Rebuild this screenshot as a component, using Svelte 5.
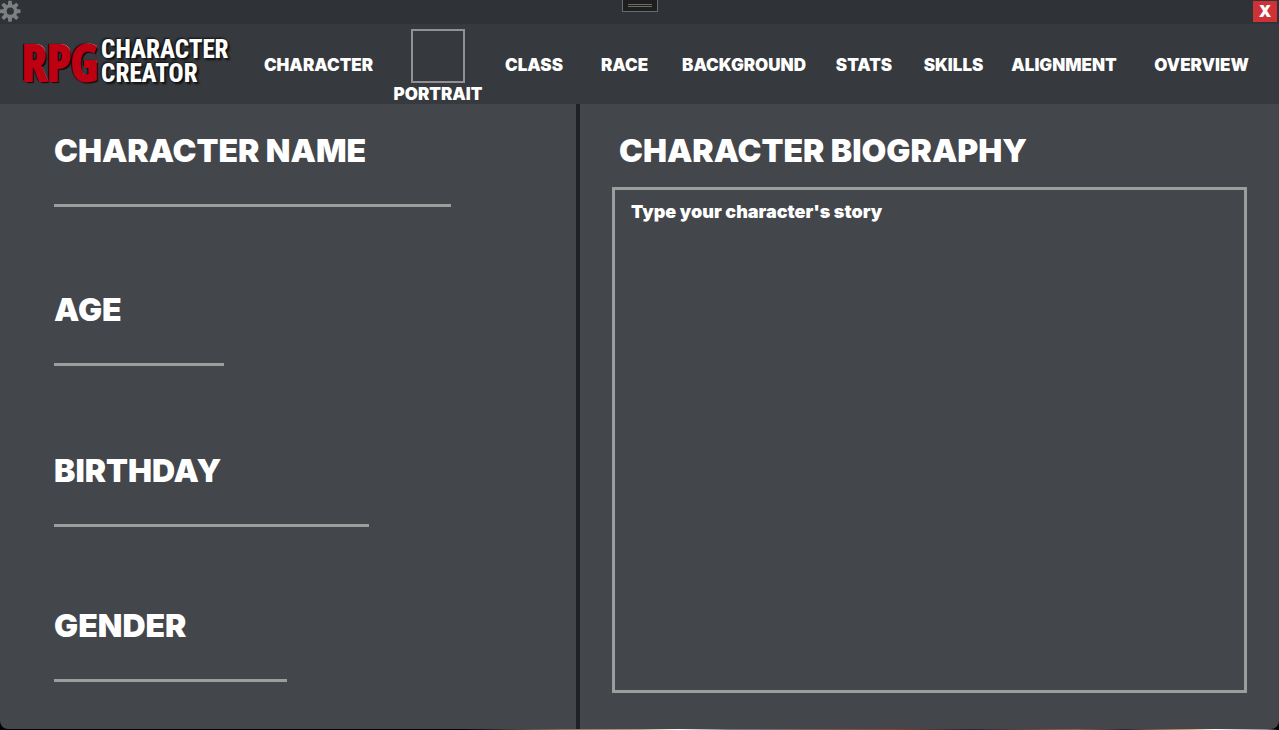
<script>
  const tabs = ['Character', 'Portrait', 'Class', 'Race', 'Background', 'Stats', 'Skills', 'Alignment', 'Overview'];
  const fields = [
    { id: 'name', label: 'Character name', width: 397 },
    { id: 'age', label: 'Age', width: 170 },
    { id: 'birthday', label: 'Birthday', width: 315 },
    { id: 'gender', label: 'Gender', width: 233 },
  ];
  let values = $state({ name: '', age: '', birthday: '', gender: '' });
  let story = $state('');
</script>

<div class="desktop">
  <div class="window">
    <div class="titlebar">
      <button class="settings" aria-label="Settings">
        <svg viewBox="0 0 22 22" width="22" height="22">
          <g fill="#7d7f80">
            {#each [0, 45, 90, 135, 180, 225, 270, 315] as angle}
              <path d="M8.3 5.5 8.8.5h3.4l.5 5z" transform="translate(-.5 .3) rotate({angle} 10.5 11)" />
            {/each}
          </g>
          <circle cx="10.3" cy="11.2" r="5.3" fill="none" stroke="#7d7f80" stroke-width="3.4" />
        </svg>
      </button>
      <button class="grip" aria-label="Move window"><i></i><i></i></button>
      <button class="close" aria-label="Close">X</button>
    </div>

    <header>
      <a class="logo" href="#home">
        <span class="rpg">RPG</span>
        <span class="words"><span>CHARACTER</span><span>CREATOR</span></span>
      </a>
      <nav>
        {#each tabs as tab}
          <a href="#{tab.toLowerCase()}" class:portrait={tab === 'Portrait'}>
            {#if tab === 'Portrait'}<i class="frame"></i>{/if}
            {tab}
          </a>
        {/each}
      </nav>
    </header>

    <main>
      <form class="details">
        {#each fields as f}
          <div class="field">
            <label for={f.id}>{f.label}</label>
            <input id={f.id} type="text" bind:value={values[f.id]} style="width: {f.width}px" />
          </div>
        {/each}
      </form>
      <section class="biography">
        <label for="bio">Character biography</label>
        <textarea id="bio" placeholder="Type your character's story" bind:value={story}></textarea>
      </section>
    </main>
  </div>
</div>

<style>
  :global(body) {
    margin: 0;
    background: #000;
  }
  .desktop {
    box-sizing: border-box;
    display: flex;
    min-height: 100vh;
    padding-bottom: 1px;
    font-family: Inter, 'Liberation Sans', sans-serif;
    font-weight: 900;
    color: #fff;
    background: linear-gradient(90deg, #000 0 36%, #8a7560 44%, #b09a80 50%, #fff 53%, #77787c 57%, #8a4030 70%, #30242a 76%, #a05a4a 84%, #30242a 88%, #d0a070 93%, #fff 95%, #888 99%, #000) bottom / 100% 1px no-repeat, #000;
  }
  .window {
    flex: 1;
    display: flex;
    flex-direction: column;
    overflow: hidden;
    border-radius: 0 0 8px 8px;
    background: #43464a;
  }
  button {
    padding: 0;
    border: 0;
    background: none;
    color: inherit;
    font: inherit;
  }
  .titlebar {
    display: grid;
    grid-template-columns: 1fr auto 1fr;
    height: 24px;
    background: #2f3236;
  }
  .settings {
    width: 22px;
    height: 22px;
  }
  .settings svg {
    display: block;
  }
  .grip {
    display: flex;
    flex-direction: column;
    justify-content: center;
    align-items: center;
    gap: 1px;
    box-sizing: border-box;
    width: 36px;
    height: 12px;
    border: 1px solid #6b6b6c;
    border-top: 0;
    background: #1e1e1f;
  }
  .grip i {
    width: 24px;
    height: 1px;
    background: #6b6b6c;
  }
  .close {
    justify-self: end;
    width: 24px;
    height: 21px;
    margin: 1px 2px 0 0;
    background: #cc3236;
    font-size: 16px;
    line-height: 21px;
  }
  header {
    display: flex;
    height: 80px;
    background: #36393d;
  }
  .logo {
    display: flex;
    align-items: center;
    gap: 3px;
    box-sizing: border-box;
    width: 253px;
    flex-shrink: 0;
    padding: 0 0 4px 22px;
    color: #fff;
    text-decoration: none;
  }
  .rpg {
    font: 700 50px/50px 'Open Sans Condensed', 'Roboto Condensed', sans-serif;
    color: #bd0012;
    -webkit-text-stroke: 2px #bd0012;
    text-shadow: -2px -1px 1px #160608, 2px 2px 1px #160608, -1px 1px 1px #160608, 1px -1px 0 #d9a0a0;
  }
  .words {
    display: flex;
    flex-direction: column;
    font: 800 25px/24px 'Roboto Condensed', 'Open Sans Condensed', sans-serif;
    text-shadow: 2px 2px 2px #111, -1px -1px 2px #111;
  }
  nav {
    flex: 1;
    display: grid;
    grid-template-columns: 131fr 108fr 84fr 97fr 142fr 98fr 81fr 140fr 135fr;
    padding-right: 10px;
  }
  nav a {
    display: flex;
    flex-direction: column;
    align-items: center;
    justify-content: center;
    gap: 1px;
    padding-top: 2px;
    color: #fff;
    font-size: 17px;
    line-height: 20px;
    text-decoration: none;
    text-transform: uppercase;
  }
  nav .portrait {
    justify-content: flex-end;
  }
  .frame {
    box-sizing: border-box;
    width: 54px;
    height: 54px;
    border: 2px solid #909192;
  }
  main {
    flex: 1;
    display: grid;
    grid-template-columns: 576fr 703fr;
  }
  .details {
    display: grid;
    grid-template-rows: 159fr 161fr 155fr 125fr;
    padding: 25px 0 0 54px;
    margin: 0;
  }
  label {
    display: block;
    font-size: 32px;
    line-height: 44px;
    text-transform: uppercase;
  }
  .field input {
    display: block;
    box-sizing: border-box;
    max-width: 100%;
    height: 34px;
    padding: 0;
    border: 0;
    border-bottom: 3px solid #9d9d9d;
    background: none;
    color: #fff;
    font: inherit;
    font-size: 18px;
    outline: none;
  }
  .biography {
    display: flex;
    flex-direction: column;
    padding: 25px 32px 36px;
    border-left: 4px solid #1f2224;
  }
  .biography label {
    padding-left: 7px;
  }
  textarea {
    flex: 1;
    display: block;
    box-sizing: border-box;
    width: 100%;
    margin-top: 14px;
    padding: 10px 16px;
    border: 3px solid #9d9d9d;
    background: none;
    color: #fff;
    font: inherit;
    font-size: 18px;
    line-height: 24px;
    resize: none;
    outline: none;
  }
  textarea::placeholder {
    color: #fff;
    opacity: 1;
  }
</style>
